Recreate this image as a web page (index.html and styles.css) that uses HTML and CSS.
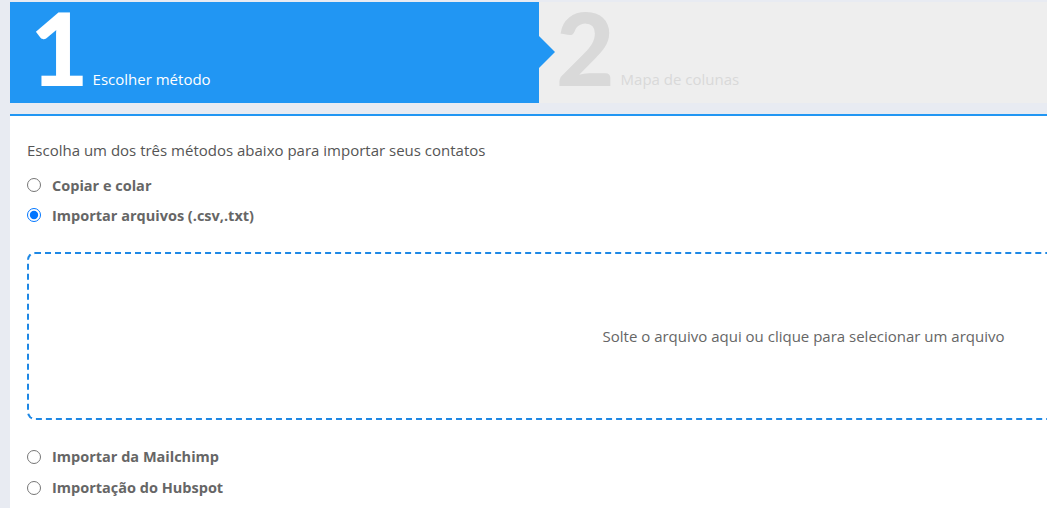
FILE: index.html
```html
<!DOCTYPE html>
<html lang="pt">
<head>
<meta charset="utf-8">
<link rel="stylesheet" href="styles.css">
</head>
<body>
<div class="page">
  <div class="steps">
    <div class="step active">
      <span class="num">1</span>
      <span class="label">Escolher método</span>
      <span class="arrow"></span>
    </div>
    <div class="step next">
      <span class="num">2</span>
      <span class="label">Mapa de colunas</span>
    </div>
  </div>
  <div class="panel">
    <p class="intro">Escolha um dos três métodos abaixo para importar seus contatos</p>
    <label class="opt"><input type="radio" name="m"> <span>Copiar e colar</span></label>
    <label class="opt"><input type="radio" name="m" checked> <span>Importar arquivos (.csv,.txt)</span></label>
    <div class="drop">Solte o arquivo aqui ou clique para selecionar um arquivo</div>
    <label class="opt tall"><input type="radio" name="m"> <span>Importar da Mailchimp</span></label>
    <label class="opt tall"><input type="radio" name="m"> <span>Importação do Hubspot</span></label>
  </div>
</div>
</body>
</html>
```
FILE: styles.css
```css
html, body {
  margin: 0;
  padding: 0;
  background: #e8ebf2;
  overflow: hidden;
  font-family: "Open Sans", "Noto Sans", sans-serif;
}
.page {
  padding: 2px 0 0 10px;
  width: 1600px;
}
.steps {
  display: flex;
  height: 101px;
}
.step {
  position: relative;
  display: flex;
  align-items: flex-end;
  box-sizing: border-box;
}
.step.active {
  width: 529px;
  background: #2196f3;
  color: #fff;
  padding-left: 20px;
}
.step.next {
  flex: 1;
  background: #eeeeee;
  color: #d9d9d9;
  padding-left: 17px;
}
.num {
  font-family: "Lato", sans-serif;
  font-weight: 900;
  font-size: 101px;
  line-height: 80px;
  margin-bottom: 16px;
}
.label {
  font-size: 15px;
  line-height: 20px;
  margin-left: 4px;
  margin-bottom: 14px;
}
.step.next .label {
  margin-left: 6px;
}
.arrow {
  position: absolute;
  right: -16px;
  top: 34px;
  width: 0;
  height: 0;
  border-top: 16px solid transparent;
  border-bottom: 16px solid transparent;
  border-left: 16px solid #2196f3;
  z-index: 2;
}
.panel {
  margin-top: 11px;
  border-top: 2px solid #2196f3;
  background: #fff;
  padding: 24px 0 20px 17px;
  height: 400px;
}
.intro {
  margin: 0 0 10px;
  font-size: 15px;
  line-height: 20px;
  color: #555;
}
.opt {
  display: flex;
  align-items: center;
  height: 30px;
  font-size: 14.5px;
  font-weight: bold;
  color: #666;
}
.opt.tall {
  height: 31px;
}
.opt input {
  margin: 0 11px 0 0;
  width: 14px;
  height: 14px;
}
.drop {
  margin: 22px 0 21px;
  width: 1553px;
  height: 168px;
  box-sizing: border-box;
  border: 2px dashed #1e88e5;
  border-radius: 8px;
  display: flex;
  align-items: center;
  justify-content: center;
  font-size: 15px;
  color: #666;
}
```
